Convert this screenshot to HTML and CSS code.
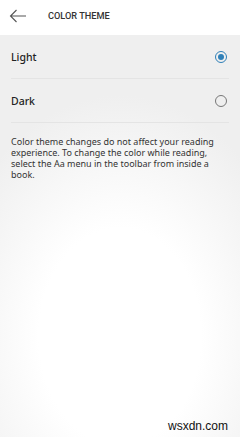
FILE: index.html
```html
<!DOCTYPE html>
<html lang="en">
<head>
<meta charset="UTF-8">
<meta name="viewport" content="width=device-width, initial-scale=1.0">
<title>Color Theme</title>
<link rel="stylesheet" href="styles.css">
</head>
<body>

<div class="header">
    <svg class="back" width="18" height="14" viewBox="0 0 18 14">
        <path d="M17 7H1.5M7.5 1L1.5 7l6 6" fill="none" stroke="#555" stroke-width="1.1"/>
    </svg>
    <div class="title">COLOR THEME</div>
</div>

<div class="content">
    <div class="option">
        <span>Light</span>
        <span class="radio checked"></span>
    </div>
    <div class="option">
        <span>Dark</span>
        <span class="radio"></span>
    </div>
    <p class="note">Color theme changes do not affect your reading experience. To change the color while reading, select the Aa menu in the toolbar from inside a book.</p>
</div>

<div class="watermark">wsxdn.com</div>

</body>
</html>
```

FILE: styles.css
```css
html, body {
    height: 100%;
}

body {
    margin: 0;
    padding: 0;
    font-family: "Noto Sans", Arial, sans-serif;
    color: #222;
    display: flex;
    flex-direction: column;
    overflow: hidden;
    position: relative;
}

.header {
    height: 35px;
    background: #fff;
    display: flex;
    align-items: center;
    flex: 0 0 auto;
}

.back {
    margin-left: 9px;
    margin-top: -4px;
}

.title {
    margin-left: 21px;
    margin-top: -4px;
    font-family: Roboto, sans-serif;
    font-size: 9.2px;
    font-weight: 500;
    color: #333;
}

.content {
    flex: 1;
    padding: 0 11px;
    background: radial-gradient(ellipse 75% 60% at 50% 75%, #ffffff 45%, #efefef 100%);
}

.option {
    height: 43px;
    border-bottom: 1px solid #e4e4e4;
    display: flex;
    align-items: center;
    justify-content: space-between;
    font-size: 10.5px;
    font-weight: 500;
    color: #222;
}

.radio {
    width: 10px;
    height: 10px;
    border: 1.2px solid #777;
    border-radius: 50%;
    margin-right: 2px;
    position: relative;
}

.radio.checked {
    border-color: #2f80b8;
}

.radio.checked::after {
    content: "";
    position: absolute;
    left: 2px;
    top: 2px;
    width: 6px;
    height: 6px;
    border-radius: 50%;
    background: #2f80b8;
}

.note {
    margin: 13px 0 0;
    font-size: 9px;
    line-height: 11px;
    color: #333;
}

.watermark {
    position: absolute;
    right: 12px;
    bottom: 4px;
    font-family: "Liberation Sans", Arial, sans-serif;
    font-size: 12px;
    color: #111;
}
```
